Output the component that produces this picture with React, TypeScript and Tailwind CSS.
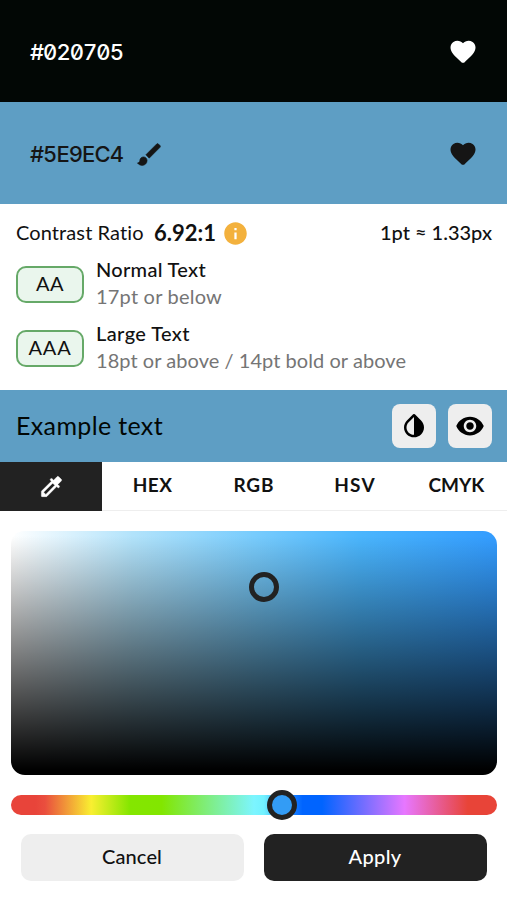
import { useState } from "react";
import type { ReactNode } from "react";
import { MdInfo, MdVisibility } from "react-icons/md";

const FOREGROUND = "#020705";
const BACKGROUND = "#5E9EC4";
const TABS = [
  { name: "HEX", width: 40 },
  { name: "RGB", width: 41 },
  { name: "HSV", width: 42 },
  { name: "CMYK", width: 56 },
];

export default function App() {
  const [tab, setTab] = useState("picker");

  return (
    <div className="flex h-[900px] w-[507px] flex-col overflow-hidden bg-white font-[Lato,'Noto_Sans',sans-serif] text-[#111]">
      <div className="flex h-[102px] shrink-0 items-center justify-between bg-[#020705] pt-[2px] pr-[29px] pl-[30px] text-white">
        <HexLabel value={FOREGROUND} />
        <Heart />
      </div>
      <div className="flex h-[102px] shrink-0 items-center justify-between bg-[#5e9ec4] pt-[2px] pr-[29px] pl-[30px] text-[#151515]">
        <div className="flex items-center gap-3">
          <HexLabel value={BACKGROUND} />
          <svg
            viewBox="0 0 24 24"
            fill="currentColor"
            stroke="currentColor"
            strokeWidth="0.5"
            className="size-[29px]"
          >
            <path d="M7 14c-1.66 0-3 1.34-3 3 0 1.31-1.16 2-2 2 .92 1.22 2.49 2 4 2 2.21 0 4-1.79 4-4 0-1.66-1.34-3-3-3zm13.71-9.37l-1.34-1.34a.996.996 0 0 0-1.41 0L9 12.25 11.75 15l8.96-8.96a.996.996 0 0 0 0-1.41z" />
          </svg>
        </div>
        <Heart />
      </div>

      <section className="h-[186px] shrink-0 pt-[15px] pr-[15px] pl-4">
        <div className="flex h-7 items-center">
          <Label className="w-[129px] pb-[2px] text-[20px]" width={128}>
            Contrast Ratio
          </Label>
          <Label
            className="ml-[9px] pb-[2px] text-[22px] font-bold"
            width={62}
          >
            6.92:1
          </Label>
          <MdInfo className="ml-[6px] size-[27px] text-[#f3b13d]" />
          <Label
            className="ml-auto pb-[2px] text-[20px] font-medium"
            width={112}
          >
            1pt ≈ 1.33px
          </Label>
        </div>
        <Grade
          badge="AA"
          badgeWidth={28}
          title="Normal Text"
          titleWidth={110}
          note="17pt or below"
          noteWidth={126}
        />
        <Grade
          badge="AAA"
          badgeWidth={43}
          title="Large Text"
          titleWidth={94}
          note="18pt or above / 14pt bold or above"
          noteWidth={310}
        />
      </section>

      <div className="flex h-[72px] shrink-0 items-center bg-[#5e9ec4] pr-[15px] pl-4 text-[#020705]">
        <Label className="text-[25px]" width={147}>
          Example text
        </Label>
        <div className="ml-auto flex gap-3">
          <IconButton label="Invert colors">
            <svg viewBox="0 0 24 24" fill="currentColor" className="size-[30px]">
              <path d="M12 4.81V19c-3.31 0-6-2.63-6-5.87 0-1.56.62-3.03 1.75-4.14L12 4.81M6.35 7.56C4.9 8.99 4 10.96 4 13.13 4 17.48 7.58 21 12 21s8-3.52 8-7.87c0-2.17-.9-4.14-2.35-5.57L12.7 2.69a1 1 0 0 0-1.4 0L6.35 7.56z" />
            </svg>
          </IconButton>
          <IconButton label="Preview">
            <MdVisibility className="size-[30px]" />
          </IconButton>
        </div>
      </div>

      <div className="flex h-[49px] shrink-0 border-b border-[#eee]">
        <button
          type="button"
          aria-label="Picker"
          onClick={() => setTab("picker")}
          className="flex h-[49px] w-[102px] items-center justify-center bg-[#222] text-white"
        >
          <svg
            viewBox="0 0 24 24"
            fill="currentColor"
            stroke="currentColor"
            strokeWidth="0.4"
            className="size-[27px]"
          >
            <path d="M20.71 5.63l-2.34-2.34a.996.996 0 0 0-1.41 0l-3.12 3.12-1.23-1.21a.996.996 0 1 0-1.41 1.41l.72.72-8.77 8.77a.5.5 0 0 0-.15.36v4.04c0 .28.22.5.5.5h4.04c.13 0 .26-.05.35-.15l8.77-8.77.72.72a.996.996 0 1 0 1.41-1.41l-1.22-1.22 3.12-3.12c.41-.4.41-1.03.02-1.42zM6.92 19L5 17.08l8.06-8.06 1.92 1.92L6.92 19z" />
          </svg>
        </button>
        {TABS.map((t) => (
          <button
            key={t.name}
            type="button"
            aria-pressed={tab === t.name}
            onClick={() => setTab(t.name)}
            className="flex flex-1 items-center justify-center pb-[2px] text-[19px] font-bold"
          >
            <Label width={t.width}>{t.name}</Label>
          </button>
        ))}
      </div>

      <div className="flex flex-col px-[11px] pt-5">
        <div className="relative h-[244px] w-[486px] rounded-[14px] bg-[linear-gradient(to_top,#000_2%,transparent_98%),linear-gradient(to_right,#fff,#b2e3fb_25%,#78ccfd_50%,#4ab5fd_72%,#339cff)]">
          <span className="absolute top-[41px] left-[238px] size-[30px] rounded-full border-[5px] border-[#222]" />
        </div>
        <div className="relative mt-5 h-5 w-[486px] rounded-full bg-[linear-gradient(to_right,#e8443a_5%,#ea4e3e_7%,#f9ef31_16.5%,#84e600_24.5%,#82e600_31%,#7cf5ff_50%,#72f2ff_52%,#2f9dff_56%,#0064ff_60%,#0064ff_64%,#e777ff_81%,#e84438_94%)]">
          <span className="absolute top-[-5px] left-[256px] size-[30px] rounded-full border-[5px] border-[#222] bg-[#339cf5]" />
        </div>
        <div className="mt-[19px] flex gap-5 px-[9.5px]">
          <button
            type="button"
            className="flex h-[47px] flex-1 items-center justify-center rounded-[10px] bg-[#eee] pb-[3px] text-[#111]"
          >
            <Label className="text-[20px] font-medium" width={60}>
              Cancel
            </Label>
          </button>
          <button
            type="button"
            className="flex h-[47px] flex-1 items-center justify-center rounded-[10px] bg-[#222] pb-[3px] text-white"
          >
            <Label className="text-[20px] font-medium" width={53}>
              Apply
            </Label>
          </button>
        </div>
      </div>
    </div>
  );
}

function Label({
  children,
  width,
  className = "",
}: {
  children: string;
  width: number;
  className?: string;
}) {
  // spreads the letters so that the text takes exactly its own width
  const [spacing, setSpacing] = useState(0);

  function measure(el: HTMLSpanElement | null) {
    if (!el || spacing !== 0) return;
    const diff = (width - el.getBoundingClientRect().width) / children.length;
    if (Math.abs(diff) > 0.01) setSpacing(diff);
  }

  return (
    <span className={`whitespace-nowrap ${className}`}>
      <span ref={measure} style={{ letterSpacing: `${spacing}px` }}>
        {children}
      </span>
    </span>
  );
}

function HexLabel({ value }: { value: string }) {
  return (
    <Label
      className="font-[Inter,monospace] text-[22px] leading-none font-medium [font-feature-settings:'zero','tnum']"
      width={93}
    >
      {value}
    </Label>
  );
}

function Heart() {
  return (
    <svg viewBox="0 0 24 24" fill="currentColor" className="size-[30px]">
      <path d="M13.35 20.13c-.76.69-1.93.69-2.69-.01l-.11-.1C5.3 15.27 1.87 12.16 2 8.28c.06-1.7.93-3.33 2.34-4.29 2.64-1.8 5.9-.96 7.66 1.1 1.76-2.06 5.02-2.91 7.66-1.1 1.41.96 2.28 2.59 2.34 4.29.14 3.88-3.3 6.99-8.55 11.76l-.1.09z" />
    </svg>
  );
}

function Grade({
  badge,
  badgeWidth,
  title,
  titleWidth,
  note,
  noteWidth,
}: {
  badge: string;
  badgeWidth: number;
  title: string;
  titleWidth: number;
  note: string;
  noteWidth: number;
}) {
  return (
    <div className="mt-[10px] flex h-[54px] items-center">
      <div className="mt-px flex h-[37px] w-[68px] items-center justify-center rounded-[10px] border-2 border-[#66a968] bg-[#eaf6ed] pb-[3px]">
        <Label className="text-[20px]" width={badgeWidth}>
          {badge}
        </Label>
      </div>
      <div className="ml-3 flex flex-col pb-[2px] text-[20px] leading-[27px]">
        <Label className="font-medium" width={titleWidth}>
          {title}
        </Label>
        <Label className="text-[#757575]" width={noteWidth}>
          {note}
        </Label>
      </div>
    </div>
  );
}

function IconButton({
  label,
  children,
}: {
  label: string;
  children: ReactNode;
}) {
  return (
    <button
      type="button"
      aria-label={label}
      className="flex size-11 items-center justify-center rounded-lg bg-[#eee] text-black"
    >
      {children}
    </button>
  );
}
